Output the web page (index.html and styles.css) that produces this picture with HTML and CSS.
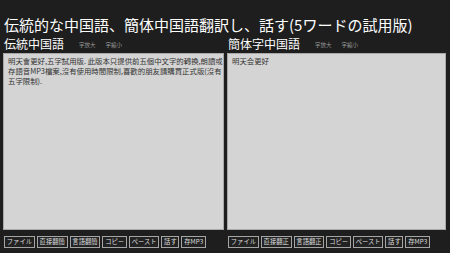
FILE: index.html
```html
<!DOCTYPE html>
<html lang="ja">
<head>
<meta charset="utf-8">
<title>伝統的な中国語、簡体中国語翻訳し、話す</title>
<link rel="stylesheet" href="styles.css">
</head>
<body>
<h1 class="title">伝統的な中国語、簡体中国語翻訳し、話す(5ワードの試用版)</h1>
<div class="columns">
  <section class="pane pane-left">
    <div class="pane-head">
      <h2 class="pane-title">伝統中国語</h2>
      <span class="size-btn first">字放大</span>
      <span class="size-btn">字縮小</span>
    </div>
    <div class="textbox">明天會更好,五字試用版. 此版本只提供前五個中文字的轉換,朗讀或<br>存語音MP3檔案,沒有使用時間限制,喜歡的朋友請購買正式版(沒有<br>五字限制).</div>
    <div class="btn-row">
      <span class="btn">ファイル</span>
      <span class="btn">直接翻簡</span>
      <span class="btn">言語翻簡</span>
      <span class="btn">コピー</span>
      <span class="btn">ペースト</span>
      <span class="btn">話す</span>
      <span class="btn">存MP3</span>
    </div>
  </section>
  <section class="pane pane-right">
    <div class="pane-head">
      <h2 class="pane-title">簡体字中国語</h2>
      <span class="size-btn first">字放大</span>
      <span class="size-btn">字縮小</span>
    </div>
    <div class="textbox">明天会更好</div>
    <div class="btn-row">
      <span class="btn">ファイル</span>
      <span class="btn">直接翻正</span>
      <span class="btn">言語翻正</span>
      <span class="btn">コピー</span>
      <span class="btn">ペースト</span>
      <span class="btn">話す</span>
      <span class="btn">存MP3</span>
    </div>
  </section>
</div>
</body>
</html>
```
FILE: styles.css
```css
html, body {
  margin: 0;
  padding: 0;
}
body {
  width: 450px;
  height: 253px;
  overflow: hidden;
  background: #1e1e1e;
  color: #ffffff;
  font-family: "Noto Sans CJK JP", "Noto Sans", sans-serif;
}
.title {
  margin: 0;
  padding: 15px 0 0 4px;
  height: 20px;
  font-size: 15px;
  line-height: 20px;
  font-weight: normal;
  white-space: nowrap;
}
.columns {
  display: grid;
  grid-template-columns: 221px 219px;
  column-gap: 3px;
  padding-left: 3px;
}
.pane {
  display: flex;
  flex-direction: column;
}
.pane-head {
  height: 18px;
  display: flex;
  align-items: center;
  padding-left: 1px;
}
.pane-title {
  margin: 0;
  font-size: 12px;
  font-weight: normal;
  line-height: 18px;
}
.size-btn {
  font-size: 5.5px;
  color: #9a9a9a;
  margin-left: 10px;
  padding-top: 1px;
}
.size-btn.first {
  margin-left: 15px;
}
.textbox {
  box-sizing: border-box;
  height: 177px;
  background: #d4d4d4;
  border: 1px solid #a8a8a8;
  padding: 2px 4px;
  color: #333333;
  font-size: 7.4px;
  line-height: 10px;
  white-space: nowrap;
}
.btn-row {
  display: flex;
  gap: 2px;
  margin-top: 6px;
  padding-left: 1px;
}
.btn {
  box-sizing: border-box;
  height: 12px;
  padding: 0 1.8px;
  border: 1px solid #a5a5a5;
  background: #222222;
  color: #dddddd;
  font-size: 6.3px;
  line-height: 10px;
  white-space: nowrap;
}
```
